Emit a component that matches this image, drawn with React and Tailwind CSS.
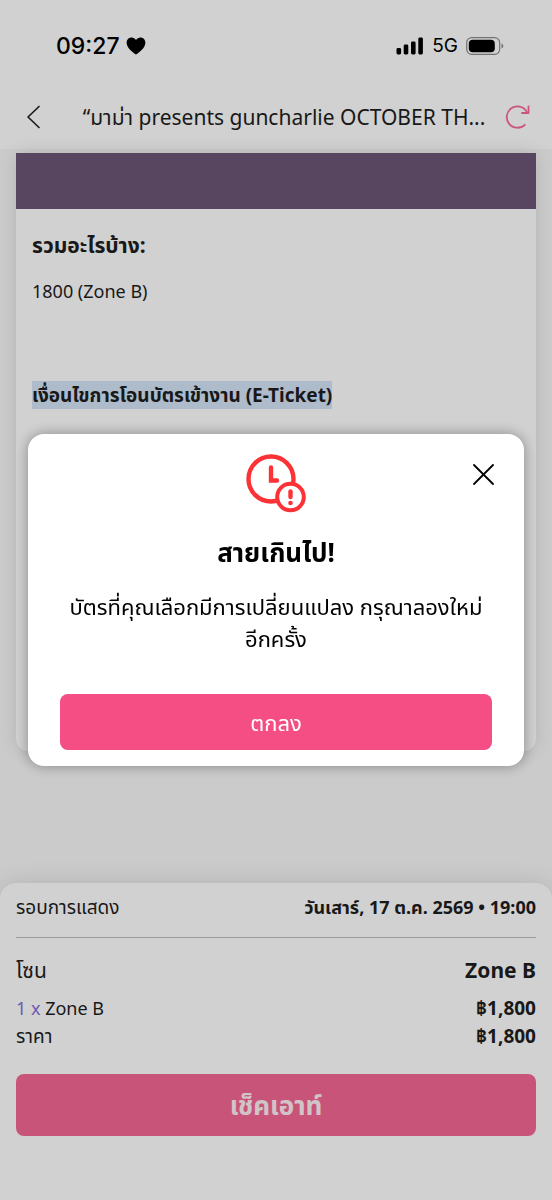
import React from "react";

const StatusBar = () => {
  return (
    <div className="flex items-center justify-between pt-7 pl-14 pr-12">
      <div className="flex items-center gap-1.5">
        <span className="font-['Inter'] text-[23px] leading-9 font-medium text-black">
          09:27
        </span>
        <svg className="w-5 h-[18px]" viewBox="0 0 20 18" fill="black">
          <path d="M10 17.6C8.2 16.4.6 11.400 .6 5.800 .6 2.700 2.800.5 5.500.5 7.400.5 9.100 1.500 10 3.100 10.900 1.500 12.600.5 14.500.5c2.700 0 4.900 2.200 4.900 5.300C19.400 11.400 11.800 16.400 10 17.600z" />
        </svg>
      </div>
      <div className="flex items-center gap-2">
        <svg className="w-7 h-[18px]" viewBox="0 0 28 18" fill="black">
          <rect x="0.500" y="11" width="4.600" height="6.500" rx="1.400" />
          <rect x="7.700" y="7.500" width="4.600" height="10" rx="1.400" />
          <rect x="15" y="4.500" width="4.600" height="13" rx="1.400" />
          <rect x="22.300" y="0.500" width="4.600" height="17" rx="1.400" />
        </svg>
        <span className="font-['Inter'] text-[19px] leading-9 text-black">5G</span>
        <svg className="w-[38px] h-[18px]" viewBox="0 0 38 18">
          <rect
            x="0.700"
            y="0.700"
            width="33"
            height="16.600"
            rx="5"
            fill="none"
            stroke="#8b8b8b"
            strokeWidth="1.200"
          />
          <rect x="2.800" y="2.800" width="26" height="12.400" rx="4" fill="black" />
          <path d="M35.500 6.500c1.200.5 1.800 1.400 1.800 2.500s-.6 2-1.800 2.500z" fill="#8b8b8b" />
        </svg>
      </div>
    </div>
  );
};

const Header = () => {
  return (
    <header className="bg-white pb-4">
      <StatusBar />
      <div className="flex items-center gap-3 pt-[37px] pl-6 pr-5">
        <button type="button" aria-label="Back" className="w-10 shrink-0">
          <svg
            className="w-5 h-6"
            viewBox="0 0 20 24"
            fill="none"
            stroke="#222"
            strokeWidth="1.700"
            strokeLinecap="round"
            strokeLinejoin="round"
          >
            <path d="M15 1.500 4 12l11 10.500" />
          </svg>
        </button>
        <h1 className="flex-1 truncate text-center text-[21px] leading-8">
          “มาม่า presents guncharlie OCTOBER TH...
        </h1>
        <button type="button" aria-label="Reload" className="shrink-0">
          <svg
            className="w-7 h-7"
            viewBox="0 0 28 28"
            fill="none"
            stroke="#f7689a"
            strokeWidth="1.800"
            strokeLinecap="round"
            strokeLinejoin="round"
          >
            <path d="M20.800 21.800A10.700 10.700 0 1 1 22.600 8.500" />
            <path d="M24.500 3.500v6.500h-6.500" />
          </svg>
        </button>
      </div>
    </header>
  );
};

const EventCard = () => {
  return (
    <section className="flex-1 mx-4 mt-1 rounded-b-xl bg-white shadow-[0_0_18px_rgba(0,0,0,0.120)]">
      <div className="h-14 bg-[#6c5576]" />
      <div className="px-4 pt-5">
        <h2 className="text-[21px] leading-8 font-bold">รวมอะไรบ้าง:</h2>
        <p className="mt-3 text-lg leading-9">1800 (Zone B)</p>
        <h3 className="mt-[72px] text-[19px] leading-7 font-bold">
          <mark className="inline-block bg-[#d4e5f7] text-inherit">
            เงื่อนไขการโอนบัตรเข้างาน (E-Ticket)
          </mark>
        </h3>
      </div>
    </section>
  );
};

const Summary = () => {
  return (
    <section className="mt-33 rounded-t-2xl bg-white px-4 pt-2 pb-16 shadow-[0_0_24px_rgba(0,0,0,0.120)]">
      <div className="flex items-baseline justify-between border-b border-[#bdbdbd] pb-3.5 leading-8">
        <span className="text-[19px]">รอบการแสดง</span>
        <span className="text-lg font-bold">วันเสาร์, 17 ต.ค. 2569 • 19:00</span>
      </div>
      <div className="mt-4 flex items-baseline justify-between text-[21px] leading-8">
        <span>โซน</span>
        <span className="font-bold">Zone B</span>
      </div>
      <div className="mt-2 flex items-baseline justify-between leading-7">
        <span className="text-lg">
          <span className="text-[#8270dc]">1 x</span> Zone B
        </span>
        <span className="text-[19px] font-bold">฿1,800</span>
      </div>
      <div className="flex items-baseline justify-between text-[19px] leading-7">
        <span>ราคา</span>
        <span className="font-bold">฿1,800</span>
      </div>
      <button
        type="button"
        className="mt-6 w-full rounded-lg bg-[#f56894] py-[13px] text-[26px] leading-9 font-bold text-[#fff0f5]"
      >
        เช็คเอาท์
      </button>
    </section>
  );
};

const AlertDialog = () => {
  return (
    <div className="fixed inset-0 flex items-center justify-center bg-black/18 px-7">
      <div
        role="alertdialog"
        aria-labelledby="alert-title"
        aria-describedby="alert-text"
        className="relative w-full rounded-2xl bg-white px-8 pt-5 pb-4 text-center text-black shadow-[0_0_14px_rgba(0,0,0,0.350)]"
      >
        <button type="button" aria-label="Close" className="absolute top-7 right-7">
          <svg
            className="w-6 h-6"
            viewBox="0 0 24 24"
            fill="none"
            stroke="black"
            strokeWidth="1.800"
            strokeLinecap="round"
          >
            <path d="M2 3l19 19M21 3l-19 19" />
          </svg>
        </button>
        <svg
          className="mx-auto w-[60px] h-[60px]"
          viewBox="0 0 60 60"
          fill="none"
          stroke="#fc3237"
          strokeLinecap="round"
        >
          <circle cx="25" cy="25" r="22.500" strokeWidth="4.400" />
          <path d="M25 13.500V26.500h6" strokeWidth="4.400" strokeLinejoin="miter" />
          <circle cx="44.500" cy="43" r="13.300" fill="white" strokeWidth="4" />
          <path d="M44.500 37.500v5.500" strokeWidth="4.400" />
          <circle cx="44.500" cy="49" r="2.300" fill="#fc3237" stroke="none" />
        </svg>
        <h2 id="alert-title" className="mt-5 text-[26px] leading-9 font-bold">
          สายเกินไป!
        </h2>
        <p id="alert-text" className="mt-5 text-[22px] leading-8">
          บัตรที่คุณเลือกมีการเปลี่ยนแปลง กรุณาลองใหม่
          <br />
          อีกครั้ง
        </p>
        <button
          type="button"
          className="mt-10 w-full rounded-lg bg-[#f54e84] py-3 text-[22px] leading-8 text-white"
        >
          ตกลง
        </button>
      </div>
    </div>
  );
};

const App = () => {
  return (
    <div className="flex min-h-screen flex-col bg-[#f8f8f8] font-['Noto_Sans','Noto_Sans_Thai',sans-serif] text-[#1e1e1e]">
      <Header />
      <EventCard />
      <Summary />
      <AlertDialog />
    </div>
  );
};

export default App;
